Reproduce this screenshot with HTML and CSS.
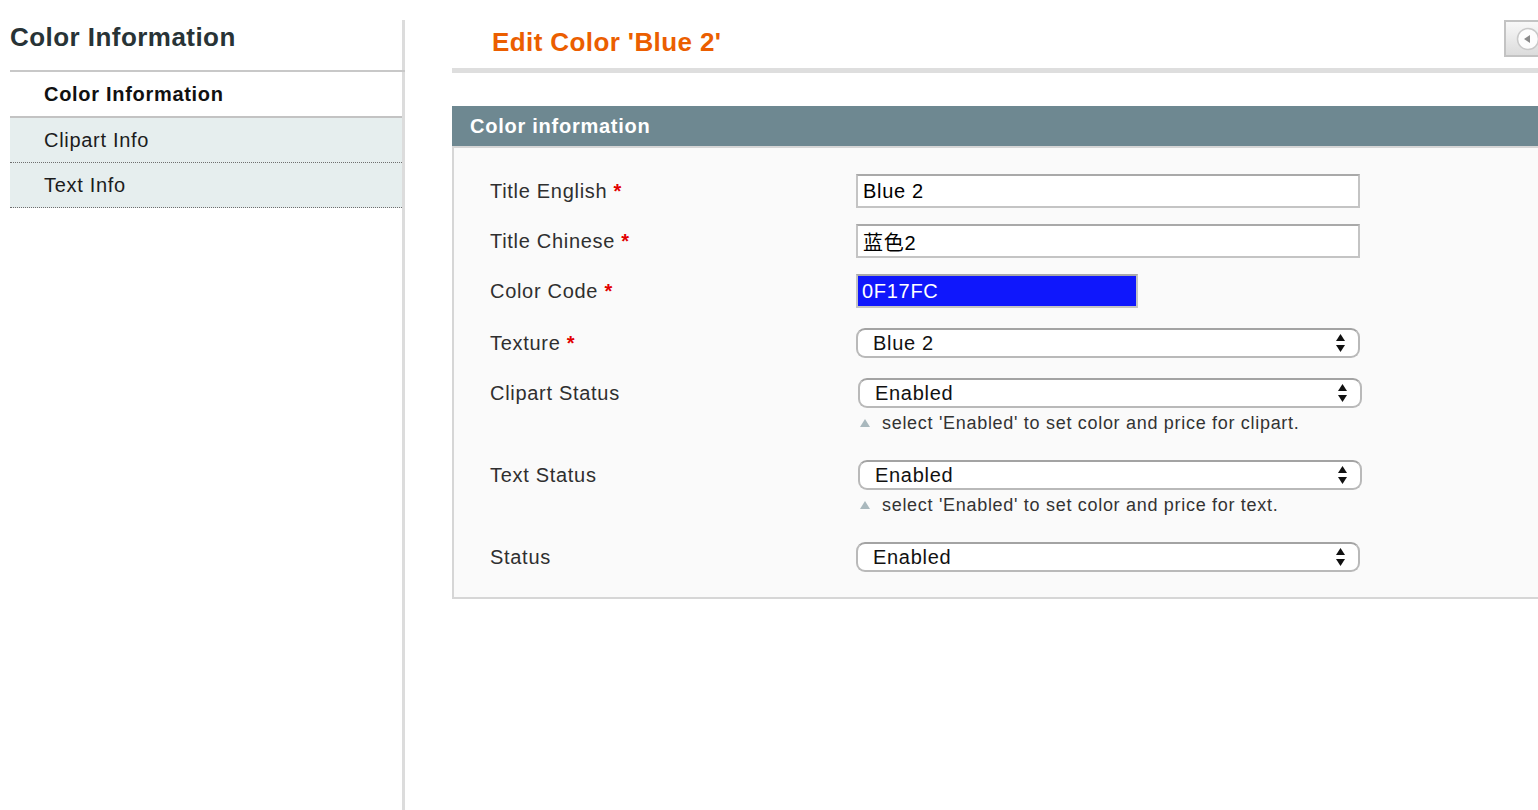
FILE: index.html
```html
<!DOCTYPE html>
<html lang="en">
<head>
<meta charset="utf-8">
<title>Edit Color 'Blue 2'</title>
<link rel="stylesheet" href="styles.css">
</head>
<body>
<div class="page">
  <aside class="sidebar">
    <h3 class="side-title">Color Information</h3>
    <ul class="tabs">
      <li class="tab active">Color Information</li>
      <li class="tab">Clipart Info</li>
      <li class="tab">Text Info</li>
    </ul>
  </aside>
  <main class="main">
    <div class="content-header">
      <h3 class="page-title">Edit Color 'Blue 2'</h3>
      <button class="back-btn" type="button" aria-label="Back">
        <svg width="24" height="24" viewBox="0 0 24 24">
          <circle cx="12" cy="12" r="10.5" fill="#fdfdfd" stroke="#c9c9c9" stroke-width="1.5"/>
          <polygon points="8,12 14,8 14,16" fill="#8a8a8a"/>
        </svg>
      </button>
    </div>
    <section class="fieldset">
      <h4 class="fieldset-head">Color information</h4>
      <div class="fieldset-body">
        <div class="row r1">
          <label class="lbl">Title English <span class="req">*</span></label>
          <div class="ctl"><input class="txt wide" type="text" value="Blue 2"></div>
        </div>
        <div class="row r2">
          <label class="lbl">Title Chinese <span class="req">*</span></label>
          <div class="ctl"><input class="txt wide" type="text" value="蓝色2"></div>
        </div>
        <div class="row r3">
          <label class="lbl">Color Code <span class="req">*</span></label>
          <div class="ctl"><input class="txt color" type="text" value="0F17FC"></div>
        </div>
        <div class="row r4">
          <label class="lbl">Texture <span class="req">*</span></label>
          <div class="ctl">
            <div class="sel"><span>Blue 2</span>
              <svg class="arr" width="11" height="20" viewBox="0 0 11 20"><polygon points="5.5,1 10,8 1,8" fill="#111"/><polygon points="1,12 10,12 5.5,19" fill="#111"/></svg>
            </div>
          </div>
        </div>
        <div class="row r5">
          <label class="lbl">Clipart Status</label>
          <div class="ctl shift">
            <div class="sel"><span>Enabled</span>
              <svg class="arr" width="11" height="20" viewBox="0 0 11 20"><polygon points="5.5,1 10,8 1,8" fill="#111"/><polygon points="1,12 10,12 5.5,19" fill="#111"/></svg>
            </div>
            <p class="note"><svg class="tri" width="12" height="10" viewBox="0 0 12 10"><polygon points="6,1 11,9 1,9" fill="#a9b8bd"/></svg>select 'Enabled' to set color and price for clipart.</p>
          </div>
        </div>
        <div class="row r6">
          <label class="lbl">Text Status</label>
          <div class="ctl shift">
            <div class="sel"><span>Enabled</span>
              <svg class="arr" width="11" height="20" viewBox="0 0 11 20"><polygon points="5.5,1 10,8 1,8" fill="#111"/><polygon points="1,12 10,12 5.5,19" fill="#111"/></svg>
            </div>
            <p class="note"><svg class="tri" width="12" height="10" viewBox="0 0 12 10"><polygon points="6,1 11,9 1,9" fill="#a9b8bd"/></svg>select 'Enabled' to set color and price for text.</p>
          </div>
        </div>
        <div class="row r7">
          <label class="lbl">Status</label>
          <div class="ctl">
            <div class="sel"><span>Enabled</span>
              <svg class="arr" width="11" height="20" viewBox="0 0 11 20"><polygon points="5.5,1 10,8 1,8" fill="#111"/><polygon points="1,12 10,12 5.5,19" fill="#111"/></svg>
            </div>
          </div>
        </div>
      </div>
    </section>
  </main>
</div>
</body>
</html>
```
FILE: styles.css
```css
* { box-sizing: border-box; }
html, body { margin: 0; padding: 0; background: #fff; }
body {
  font-family: "Liberation Sans", Arial, "Noto Sans CJK SC", sans-serif;
  color: #2f2f2f;
  overflow: hidden;
  letter-spacing: 0.7px;
}
.page {
  display: flex;
  height: 810px;
  width: 1538px;
  overflow: hidden;
}

/* Sidebar */
.sidebar {
  margin: 20px 0 0 10px;
  width: 395px;
  flex: none;
  border-right: 3px solid #dcdcdc;
}
.side-title {
  margin: 0;
  height: 52px;
  padding-top: 1px;
  font-size: 26px;
  line-height: 32px;
  font-weight: bold;
  color: #283336;
  letter-spacing: 0.45px;
  border-bottom: 2px solid #c8c8c8;
  margin-right: -3px;
}
.tabs { list-style: none; margin: 0; padding: 0; }
.tab {
  height: 45px;
  line-height: 44px;
  padding-left: 34px;
  font-size: 20px;
  color: #1c1c1c;
  background: #e6eeee;
  border-bottom: 1px dotted #6f6f6f;
}
.tab.active {
  background: #fff;
  font-weight: bold;
  color: #111;
  height: 46px;
  border-bottom: 2px solid #c3c3c3;
}

/* Main */
.main {
  margin-left: 47px;
  width: 1100px;
  flex: none;
}
.content-header {
  display: flex;
  align-items: flex-start;
  height: 73px;
  border-bottom: 5px solid #dedede;
}
.page-title {
  margin: 0;
  padding: 26px 0 0 40px;
  font-size: 26px;
  line-height: 32px;
  font-weight: bold;
  color: #eb5e00;
  letter-spacing: 0.4px;
}
.back-btn {
  margin: 20px 0 0 auto;
  width: 48px;
  height: 37px;
  padding: 0 0 0 10px;
  border: 2px solid #c3c3c3;
  background: linear-gradient(#f8f8f8, #dcdcdc);
  display: flex;
  align-items: center;
}
.fieldset { margin-top: 33px; }
.fieldset-head {
  margin: 0;
  height: 40px;
  line-height: 40px;
  padding-left: 18px;
  background: #6e8891;
  color: #fff;
  font-size: 20px;
  font-weight: bold;
  letter-spacing: 0.75px;
}
.fieldset-body {
  background: #fafafa;
  border: 2px solid #d6d6d6;
  padding: 26px 0 25px 36px;
  display: flex;
  flex-direction: column;
}
.row { display: flex; align-items: flex-start; }
.lbl {
  width: 366px;
  flex: none;
  font-size: 20px;
  line-height: 34px;
  color: #2f2f2f;
}
.r4 .lbl, .r5 .lbl, .r6 .lbl, .r7 .lbl { line-height: 30px; }
.req { color: #e20000; font-weight: bold; }
.r2, .r3 { margin-top: 16px; }
.r4, .r5 { margin-top: 20px; }
.r6, .r7 { margin-top: 26px; }
.ctl.shift { margin-left: 2px; }

.txt {
  display: block;
  height: 34px;
  border: 2px solid #c4c4c4;
  border-top-color: #a9a9a9;
  background: #fff;
  font-family: "Liberation Sans", Arial, "Noto Sans CJK SC", sans-serif;
  font-size: 20px;
  letter-spacing: 0.7px;
  color: #000;
  padding: 0 5px;
  margin: 0;
  outline: none;
}
.txt.wide { width: 504px; }
.txt.color {
  width: 282px;
  background: #0f17fc;
  color: #fff;
  padding-left: 4px;
}
.sel {
  width: 504px;
  height: 30px;
  border: 2px solid #b9b9b9;
  border-top-color: #a3a3a3;
  border-radius: 9px;
  background: #fff;
  display: flex;
  align-items: center;
  padding: 0 12px 0 15px;
  font-size: 20px;
  color: #111;
}
.sel span { flex: 1; }
.arr { display: block; }
.note {
  margin: 4px 0 0;
  height: 22px;
  line-height: 22px;
  font-size: 18px;
  color: #333;
  display: flex;
  align-items: center;
}
.tri { margin: 0 11px 0 1px; }
```
